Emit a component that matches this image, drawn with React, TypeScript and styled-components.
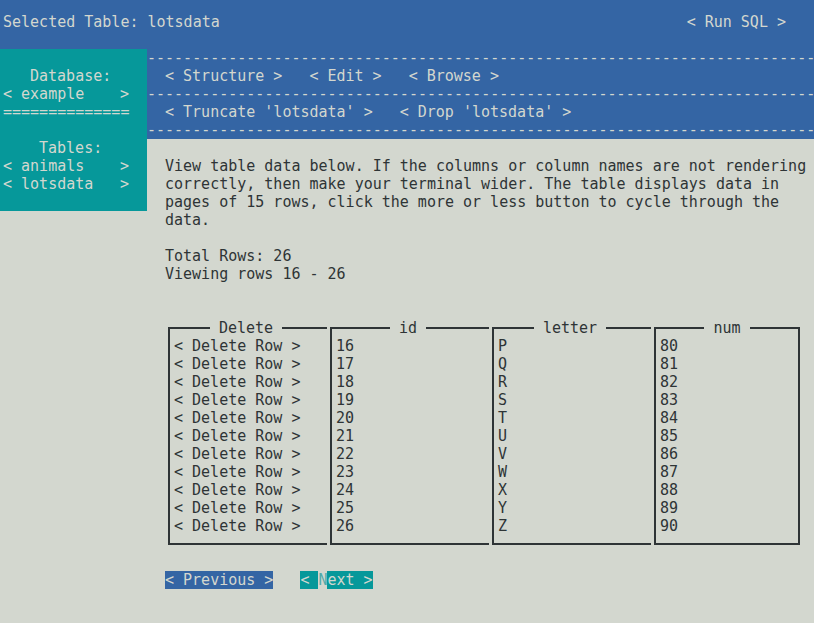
import React from 'react';
import styled, { createGlobalStyle } from 'styled-components';

const BLUE = '#3465a4';
const TEAL = '#06989a';
const GREY = '#d3d7cf';
const INK = '#2e3436';

const GlobalStyle = createGlobalStyle`
  html, body {
    margin: 0;
    padding: 0;
    background: ${GREY};
  }
`;

const Screen = styled.div`
  width: 814px;
  height: 623px;
  overflow: hidden;
  background: ${GREY};
  color: ${INK};
  font-family: "DejaVu Sans Mono", "Liberation Mono", monospace;
  font-size: 15px;
  line-height: 18px;
  white-space: pre;
`;

const TopBar = styled.div`
  display: flex;
  justify-content: space-between;
  padding: 13px 28px 18px 3px;
  background: ${BLUE};
  color: ${GREY};
`;

const Body = styled.div`
  display: flex;
  align-items: flex-start;
`;

const Sidebar = styled.div`
  flex: none;
  width: 144px;
  padding: 18px 0 18px 3px;
  display: flex;
  flex-direction: column;
  gap: 18px;
  background: ${TEAL};
  color: ${GREY};
`;

const SideGroup = styled.div`
  display: flex;
  flex-direction: column;
`;

const SideLabel = styled.div<{ $indent: number }>`
  padding-left: ${props => props.$indent * 9}px;
`;

const SideButton = styled.div`
  width: 126px;
  display: flex;
  justify-content: space-between;
`;

const Main = styled.div`
  flex: 1;
  min-width: 0;
`;

const Nav = styled.div`
  background: ${BLUE};
  color: ${GREY};
`;

const Rule = styled.div`
  height: 18px;
`;

const NavRow = styled.div`
  display: flex;
  gap: 27px;
  padding-left: 18px;
`;

const Content = styled.div`
  padding: 18px 0 0 18px;
`;

const Para = styled.p`
  margin: 0;
`;

const Stats = styled.div`
  margin-top: 18px;
`;

const Table = styled.div`
  display: flex;
  gap: 3px;
  margin: 44px 0 0 3px;
`;

const Column = styled.div<{ $last?: boolean }>`
  box-sizing: border-box;
  width: ${props => (props.$last ? 146 : 159)}px;
  padding-bottom: 8px;
  border: 2px solid ${INK};
  border-right-width: ${props => (props.$last ? 2 : 0)}px;
`;

const ColumnHead = styled.div<{ $last?: boolean }>`
  height: 18px;
  margin-top: -10px;
  padding-right: ${props => (props.$last ? 0 : 5)}px;
  display: flex;
  justify-content: center;
`;

const ColumnTitle = styled.span`
  padding: 0 9px;
  background: ${GREY};
`;

const Cell = styled.div`
  height: 18px;
  padding-left: 4px;
`;

const Pager = styled.div`
  display: flex;
  gap: 27px;
  margin-top: 26px;
`;

const PagerButton = styled.span<{ $tone: 'blue' | 'teal' }>`
  background: ${props => (props.$tone === 'blue' ? BLUE : TEAL)};
  color: ${GREY};
`;

const Cursor = styled.span`
  background: ${GREY};
  color: #4fa9aa;
`;

// 74 columns of dashes fill the nav area to the right edge
const dashes = '-'.repeat(74);

const rows = Array.from({ length: 11 }, (_, i) => ({
  id: 16 + i,
  letter: String.fromCharCode(80 + i),
  num: 80 + i,
}));

const columns: { title: string; values: string[] }[] = [
  { title: 'Delete', values: rows.map(() => '< Delete Row >') },
  { title: 'id', values: rows.map(r => String(r.id)) },
  { title: 'letter', values: rows.map(r => r.letter) },
  { title: 'num', values: rows.map(r => String(r.num)) },
];

const intro = [
  'View table data below. If the columns or column names are not rendering',
  'correctly, then make your terminal wider. The table displays data in',
  'pages of 15 rows, click the more or less button to cycle through the',
  'data.',
].join('\n');

export default function App() {
  return (
    <Screen>
      <GlobalStyle />
      <TopBar>
        <span>Selected Table: lotsdata</span>
        <span>{'< Run SQL >'}</span>
      </TopBar>
      <Body>
        <Sidebar>
          <SideGroup>
            <SideLabel $indent={3}>Database:</SideLabel>
            <SideButton>
              <span>{'< example'}</span>
              <span>{'>'}</span>
            </SideButton>
            <div>==============</div>
          </SideGroup>
          <SideGroup>
            <SideLabel $indent={4}>Tables:</SideLabel>
            <SideButton>
              <span>{'< animals'}</span>
              <span>{'>'}</span>
            </SideButton>
            <SideButton>
              <span>{'< lotsdata'}</span>
              <span>{'>'}</span>
            </SideButton>
          </SideGroup>
        </Sidebar>
        <Main>
          <Nav>
            <Rule>{dashes}</Rule>
            <NavRow>
              <span>{'< Structure >'}</span>
              <span>{'< Edit >'}</span>
              <span>{'< Browse >'}</span>
            </NavRow>
            <Rule>{dashes}</Rule>
            <NavRow>
              <span>{"< Truncate 'lotsdata' >"}</span>
              <span>{"< Drop 'lotsdata' >"}</span>
            </NavRow>
            <Rule>{dashes}</Rule>
          </Nav>
          <Content>
            <Para>{intro}</Para>
            <Stats>
              <div>Total Rows: 26</div>
              <div>Viewing rows 16 - 26</div>
            </Stats>
            <Table>
              {columns.map((col, i) => {
                const last = i === columns.length - 1;
                return (
                  <Column key={col.title} $last={last}>
                    <ColumnHead $last={last}>
                      <ColumnTitle>{col.title}</ColumnTitle>
                    </ColumnHead>
                    {col.values.map((v, j) => (
                      <Cell key={j}>{v}</Cell>
                    ))}
                  </Column>
                );
              })}
            </Table>
            <Pager>
              <PagerButton $tone="blue">{'< Previous >'}</PagerButton>
              <PagerButton $tone="teal">
                {'< '}
                <Cursor>N</Cursor>
                {'ext >'}
              </PagerButton>
            </Pager>
          </Content>
        </Main>
      </Body>
    </Screen>
  );
}
